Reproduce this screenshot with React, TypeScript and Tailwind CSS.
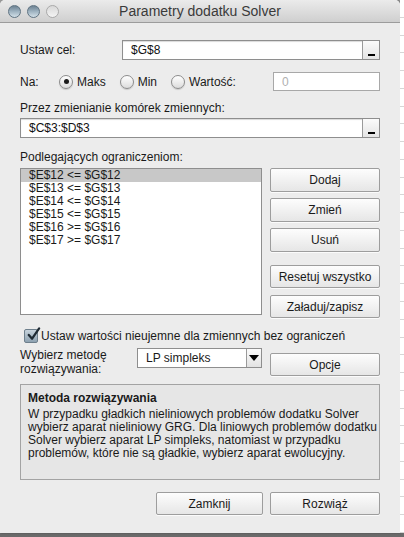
import React from 'react';

const font = { fontFamily: '"Liberation Sans", Arial, sans-serif' };

const constraints = [
  '$E$12 <= $G$12',
  '$E$13 <= $G$13',
  '$E$14 <= $G$14',
  '$E$15 <= $G$15',
  '$E$16 >= $G$16',
  '$E$17 >= $G$17',
];

const description = [
  'W przypadku gładkich nieliniowych problemów dodatku Solver',
  'wybierz aparat nieliniowy GRG. Dla liniowych problemów dodatku',
  'Solver wybierz aparat LP simpleks, natomiast w przypadku',
  'problemów, które nie są gładkie, wybierz aparat ewolucyjny.',
];

function MacButton({ label, className = '' }: { label: string; className?: string }) {
  return (
    <button
      className={`flex items-center justify-center rounded-[2px] border border-[#9d9d9d] bg-gradient-to-b from-[#fdfdfd] to-[#e6e6e6] text-[12px] text-[#1a1a1a] shadow-[0_1px_0_rgba(255,255,255,0.8)] ${className}`}
    >
      {label}
    </button>
  );
}

function RefInput({ value, className = '' }: { value: string; className?: string }) {
  return (
    <div className={`flex h-[20px] items-stretch border border-[#8e8e8e] bg-white shadow-[inset_0_1px_1px_rgba(0,0,0,0.15)] ${className}`}>
      <div className="flex flex-1 items-center pl-[8px] text-[12px] text-[#111]">{value}</div>
      <div className="relative w-[17px] border-l border-[#9a9a9a] bg-gradient-to-b from-[#fbfbfb] to-[#e4e4e4]">
        <div className="absolute bottom-[3px] left-[5px] h-[2px] w-[7px] bg-black" />
      </div>
    </div>
  );
}

function Radio({ checked, label }: { checked?: boolean; label: string }) {
  return (
    <div className="flex items-center gap-[4px]">
      <div className="flex h-[14px] w-[14px] items-center justify-center rounded-full border border-[#8c8c8c] bg-gradient-to-b from-[#ffffff] to-[#dcdcdc] shadow-[0_1px_1px_rgba(0,0,0,0.15)]">
        {checked && <div className="h-[5px] w-[5px] rounded-full bg-[#1c1c1c]" />}
      </div>
      <span className="text-[12px] text-[#1a1a1a]">{label}</span>
    </div>
  );
}

function Light({ dim }: { dim?: boolean }) {
  return (
    <div
      className={`h-[13px] w-[13px] rounded-full border ${
        dim
          ? 'border-[#a9a9a9] bg-gradient-to-b from-[#d8d8d8] to-[#f4f4f4]'
          : 'border-[#5f7382] bg-gradient-to-b from-[#6d8292] via-[#9fb3c1] to-[#d3e0e8]'
      }`}
    />
  );
}

export default function App() {
  return (
    <div className="flex h-[537px] w-[404px] flex-col bg-gradient-to-b from-[#9a9a9a] to-[#6a6a6a]" style={font}>
      <div className="flex h-[533px] w-full">
        <div className="flex w-[400px] flex-col overflow-hidden rounded-t-[5px] bg-[#ececec] shadow-[1px_0_2px_rgba(0,0,0,0.35)]">
          {/* title bar */}
          <div className="relative flex h-[23px] items-center border-b border-[#9c9c9c] bg-gradient-to-b from-[#ebebeb] to-[#cfcfcf]">
            <div className="flex items-center gap-[6px] pl-[8px]">
              <Light />
              <Light />
              <Light dim />
            </div>
            <div className="absolute inset-0 flex items-center justify-center text-[14px] text-[#3a3a3a]">
              Parametry dodatku Solver
            </div>
          </div>

          <div className="flex flex-col px-[20px] text-[12px] text-[#1a1a1a]">
            {/* target */}
            <div className="mt-[17px] flex items-center">
              <span className="w-[102px]">Ustaw cel:</span>
              <RefInput value="$G$8" className="flex-1" />
            </div>

            {/* to */}
            <div className="mt-[12px] flex h-[19px] items-center">
              <span className="w-[39px]">Na:</span>
              <div className="flex items-center gap-[14px]">
                <Radio checked label="Maks" />
                <Radio label="Min" />
                <Radio label="Wartość:" />
              </div>
              <div className="ml-auto flex h-[19px] w-[107px] items-center border border-[#a8a8a8] bg-white pl-[8px] text-[#b0b0b0]">
                0
              </div>
            </div>

            <div className="mt-[10px] leading-[15px]">Przez zmienianie komórek zmiennych:</div>
            <RefInput value="$C$3:$D$3" className="mt-[2px]" />

            <div className="mt-[12px] leading-[15px]">Podlegających ograniczeniom:</div>

            {/* constraints */}
            <div className="mt-[3px] flex items-start gap-[8px]">
              <div className="h-[147px] w-[242px] border border-[#8e8e8e] bg-white">
                {constraints.map((c, i) => (
                  <div
                    key={c}
                    className={`h-[13px] pl-[8px] text-[12px] leading-[13px] ${i === 0 ? 'bg-[#c8c8c8]' : ''}`}
                  >
                    {c}
                  </div>
                ))}
              </div>
              <div className="flex flex-1 flex-col">
                <MacButton label="Dodaj" className="h-[24px]" />
                <MacButton label="Zmień" className="mt-[6px] h-[24px]" />
                <MacButton label="Usuń" className="mt-[6px] h-[24px]" />
                <MacButton label="Resetuj wszystko" className="mt-[13px] h-[23px]" />
                <MacButton label="Załaduj/zapisz" className="mt-[7px] h-[23px]" />
              </div>
            </div>

            {/* checkbox */}
            <div className="mt-[10px] flex h-[16px] items-center gap-[3px] pl-[4px]">
              <div className="relative h-[14px] w-[14px] rounded-[2px] border border-[#6e7f8c] bg-gradient-to-b from-[#c7d3dc] to-[#8ea2b1]">
                <svg viewBox="0 0 16 16" className="absolute left-[1px] top-[-3px] h-[15px] w-[15px]">
                  <path d="M3 8.5 L6.5 12.5 L14 1.5" fill="none" stroke="#1e2a33" strokeWidth="2.4" strokeLinecap="round" strokeLinejoin="round" />
                </svg>
              </div>
              <span className="text-[12px]">Ustaw wartości nieujemne dla zmiennych bez ograniczeń</span>
            </div>

            {/* method */}
            <div className="mt-[4px] flex h-[28px] items-center">
              <div className="w-[117px] leading-[14px]">
                Wybierz metodę
                <br />
                rozwiązywania:
              </div>
              <div className="flex h-[20px] w-[125px] items-stretch self-start border border-[#8e8e8e] bg-white">
                <div className="flex flex-1 items-center pl-[8px]">LP simpleks</div>
                <div className="flex w-[15px] items-center justify-center border-l border-[#9a9a9a] bg-gradient-to-b from-[#fbfbfb] to-[#e2e2e2]">
                  <div className="h-0 w-0 border-x-[5px] border-t-[6px] border-x-transparent border-t-black" />
                </div>
              </div>
              <MacButton label="Opcje" className="ml-[8px] h-[23px] flex-1 self-end" />
            </div>

            {/* description */}
            <div className="mt-[8px] h-[96px] border border-[#a3a3a3] bg-[#e6e6e6] px-[7px] pt-[5px]">
              <div className="font-bold leading-[16px]">Metoda rozwiązywania</div>
              <div className="mt-[2px] text-[12px] leading-[13px]">
                {description.map((l) => (
                  <div key={l} className="whitespace-nowrap">
                    {l}
                  </div>
                ))}
              </div>
            </div>

            {/* footer */}
            <div className="mt-[12px] flex justify-end gap-[7px]">
              <MacButton label="Zamknij" className="h-[23px] w-[107px]" />
              <MacButton label="Rozwiąż" className="h-[23px] w-[110px]" />
            </div>
          </div>
        </div>
        <div className="flex w-[4px] flex-col bg-white">
          {Array.from({ length: 30 }).map((_, i) => (
            <div key={i} className="h-[18px] border-b border-[#d6d6d6]" />
          ))}
        </div>
      </div>
    </div>
  );
}
